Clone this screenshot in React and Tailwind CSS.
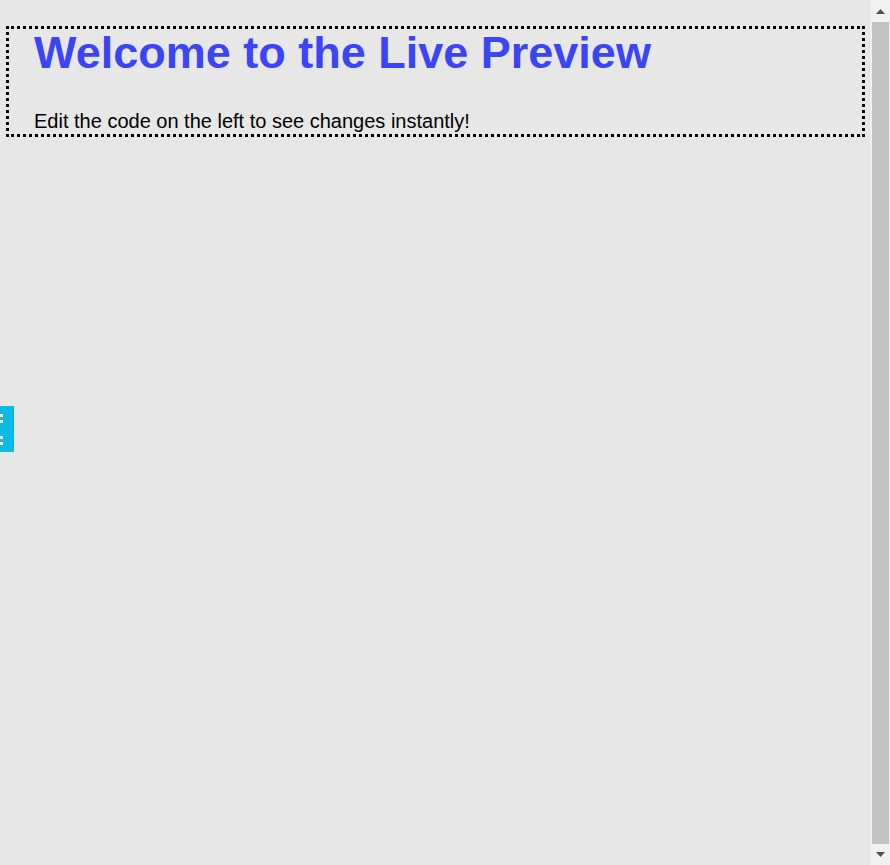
export default function App() {
  return (
    <div className="flex h-[865px] bg-[#e7e7e7] font-['Liberation_Sans',Arial,sans-serif]">
      <div className="flex-1 pt-[26px]">
        {/* preview box */}
        <div className="ml-[6px] mr-[5px] h-[111px] border-[3px] border-dotted border-black pl-[25px]">
          <h1 className="text-[45px] leading-[47px] font-bold text-[#3b44f6]">
            Welcome to the Live Preview
          </h1>
          <p className="mt-[34px] text-[20px] leading-[23px] text-black">
            Edit the code on the left to see changes instantly!
          </p>
        </div>
      </div>

      {/* scrollbar */}
      <div className="flex w-[20px] flex-col items-center bg-[#f1f1f1]">
        <div className="flex h-[22px] w-full items-center justify-center">
          <svg width="9" height="5" viewBox="0 0 9 5">
            <path d="M4.5 0L9 5H0z" fill="#505050" />
          </svg>
        </div>
        <div className="ml-[1px] w-[17px] flex-1 bg-[#c1c1c1]" />
        <div className="flex h-[21px] w-full items-center justify-center">
          <svg width="9" height="5" viewBox="0 0 9 5">
            <path d="M0 0H9L4.5 5z" fill="#505050" />
          </svg>
        </div>
      </div>

      {/* drag handle */}
      <div className="fixed left-0 top-[406px] flex h-[46px] w-[14px] flex-col justify-center gap-[13px] bg-[#0cbbe8]">
        <div className="flex flex-col gap-[3px]">
          <span className="h-[3px] w-[3px] bg-white" />
          <span className="h-[3px] w-[3px] bg-white" />
        </div>
        <div className="flex flex-col gap-[3px]">
          <span className="h-[3px] w-[3px] bg-white" />
          <span className="h-[3px] w-[3px] bg-white" />
        </div>
      </div>
    </div>
  );
}
